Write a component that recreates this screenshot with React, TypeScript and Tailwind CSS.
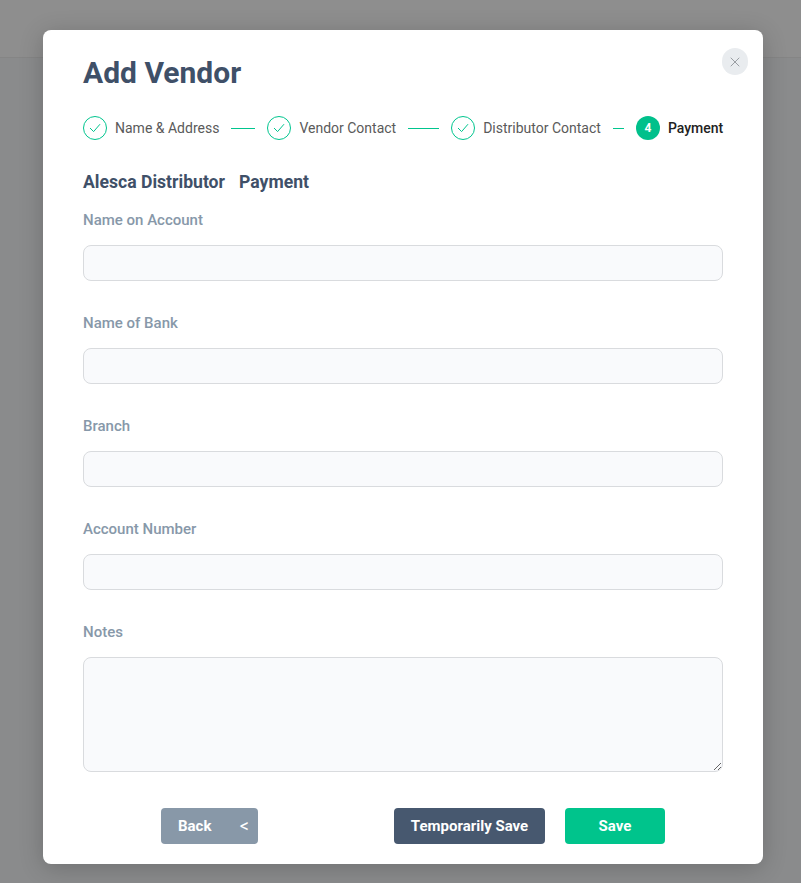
import { X } from "lucide-react";

const steps = [
  { label: "Name & Address", line: "w-[24px]" },
  { label: "Vendor Contact", line: "w-[31px]" },
  { label: "Distributor Contact", line: "w-[11px]" },
];

const fields = ["Name on Account", "Name of Bank", "Branch", "Account Number"];

function Check() {
  return (
    <span className="flex h-6 w-6 shrink-0 items-center justify-center rounded-full border border-[#00c58e]">
      <svg width="12" height="10" viewBox="0 0 12 10" fill="none" stroke="#00c58e" strokeWidth="1">
        <path d="M1 5l3.6 3.6L11 1.2" />
      </svg>
    </span>
  );
}

export default function App() {
  return (
    <div className="relative h-[883px] w-full overflow-hidden bg-[#8a8b8c] font-['Roboto',sans-serif]">
      <div className="h-[58px] border-b border-[#858585] bg-[#8e8e8e]" />

      {/* modal */}
      <div className="absolute left-[43px] top-[30px] h-[834px] w-[720px] rounded-lg bg-white px-10 shadow-[0_4px_24px_rgba(0,0,0,0.2)]">
        <button className="absolute right-[15px] top-[18px] flex h-[27px] w-[26px] items-center justify-center rounded-full bg-[#e9ecef] text-[#7b7f85]">
          <X size={16} strokeWidth={1.1} />
        </button>

        <h1 className="pt-[23px] text-[30px] font-bold leading-[40px] text-[#3f5068]">Add Vendor</h1>

        <div className="mt-[23px] flex h-6 items-center">
          {steps.map((s) => (
            <div key={s.label} className="flex items-center whitespace-nowrap">
              <Check />
              <span className="ml-2 text-sm text-[#5a5a5a]">{s.label}</span>
              <span className={`mx-3 h-px bg-[#00c58e] ${s.line}`} />
            </div>
          ))}
          <span className="flex h-6 w-6 shrink-0 items-center justify-center rounded-full bg-[#00c08b] text-xs font-bold text-white">
            4
          </span>
          <span className="ml-2 whitespace-nowrap text-sm font-medium text-[#222222]">Payment</span>
        </div>

        <div className="mt-[30px] flex gap-[14px] text-[17.6px] font-bold leading-6 text-[#3f5068]">
          <span>Alesca Distributor</span>
          <span>Payment</span>
        </div>

        <div className="mt-4 flex flex-col gap-8">
          {fields.map((f) => (
            <div key={f}>
              <label className="block text-[15px] font-medium leading-5 text-[#8798a9]">{f}</label>
              <input className="mt-[15px] block h-9 w-full rounded-lg border border-[#d9dbde] bg-[#f9fafc] px-3 outline-none" />
            </div>
          ))}
          <div>
            <label className="block text-[15px] font-medium leading-5 text-[#8798a9]">Notes</label>
            <textarea className="mt-[15px] block h-[115px] w-full rounded-lg border border-[#d9dbde] bg-[#f9fafc] px-3 outline-none" />
          </div>
        </div>

        <div className="mt-[36px] flex pl-[78px] text-[15px] font-bold text-white">
          <button className="flex h-9 w-[97px] items-center justify-between rounded bg-[#8898a8] pl-[17px] pr-[9px]">
            <span>Back</span>
            <span className="text-lg font-normal">&lt;</span>
          </button>
          <button className="ml-[136px] h-9 w-[151px] rounded bg-[#47586f]">Temporarily Save</button>
          <button className="ml-5 h-9 w-[100px] rounded bg-[#00c48c]">Save</button>
        </div>
      </div>
    </div>
  );
}
